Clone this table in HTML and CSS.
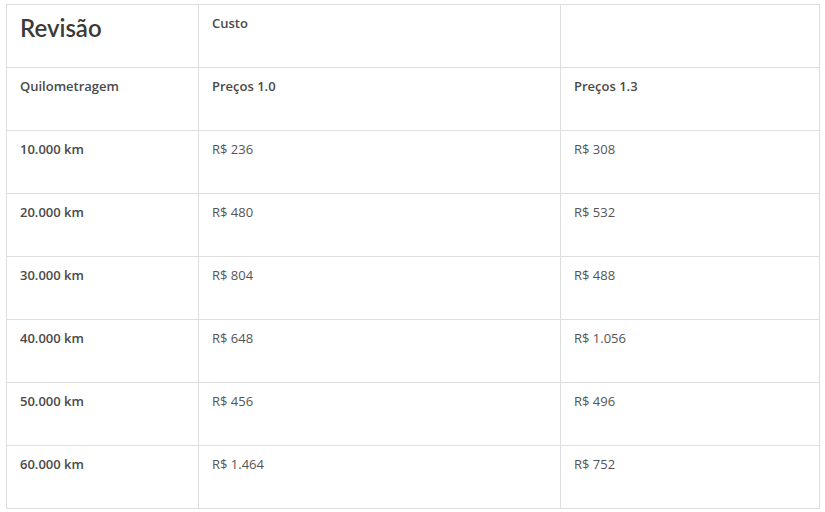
FILE: index.html
```html
<!DOCTYPE html>
<html lang="pt">
<head>
<meta charset="utf-8">
<link rel="stylesheet" href="styles.css">
</head>
<body>
<table class="tbl">
  <colgroup><col class="c1"><col class="c2"><col class="c3"></colgroup>
  <tr>
    <td class="title">Revisão</td>
    <td class="head">Custo</td>
    <td></td>
  </tr>
  <tr>
    <td class="head">Quilometragem</td>
    <td class="head">Preços 1.0</td>
    <td class="head">Preços 1.3</td>
  </tr>
  <tr><td class="head">10.000 km</td><td>R$ 236</td><td>R$ 308</td></tr>
  <tr><td class="head">20.000 km</td><td>R$ 480</td><td>R$ 532</td></tr>
  <tr><td class="head">30.000 km</td><td>R$ 804</td><td>R$ 488</td></tr>
  <tr><td class="head">40.000 km</td><td>R$ 648</td><td>R$ 1.056</td></tr>
  <tr><td class="head">50.000 km</td><td>R$ 456</td><td>R$ 496</td></tr>
  <tr><td class="head">60.000 km</td><td>R$ 1.464</td><td>R$ 752</td></tr>
</table>
</body>
</html>
```
FILE: styles.css
```css
html, body {
  margin: 0;
  padding: 0;
  background: #fff;
}
body {
  padding: 4px 0 0 6px;
  font-family: "Open Sans", "Liberation Sans", sans-serif;
  font-size: 13px;
  color: #555;
}
.tbl {
  border-collapse: collapse;
  table-layout: fixed;
  width: 813px;
}
.c1 { width: 192px; }
.c2 { width: 362px; }
.c3 { width: 259px; }
.tbl td {
  border: 1px solid #ddd;
  height: 63px;
  padding: 9px 13px 0 13px;
  vertical-align: top;
  line-height: 19px;
  box-sizing: border-box;
}
.tbl td.head {
  font-weight: 600;
  color: #4a4a4a;
}
.tbl td.title {
  font-family: Lato, "Liberation Sans", sans-serif;
  font-weight: 600;
  font-size: 24px;
  line-height: 30px;
  padding-top: 8px;
  color: #3a3a3a;
}
```
